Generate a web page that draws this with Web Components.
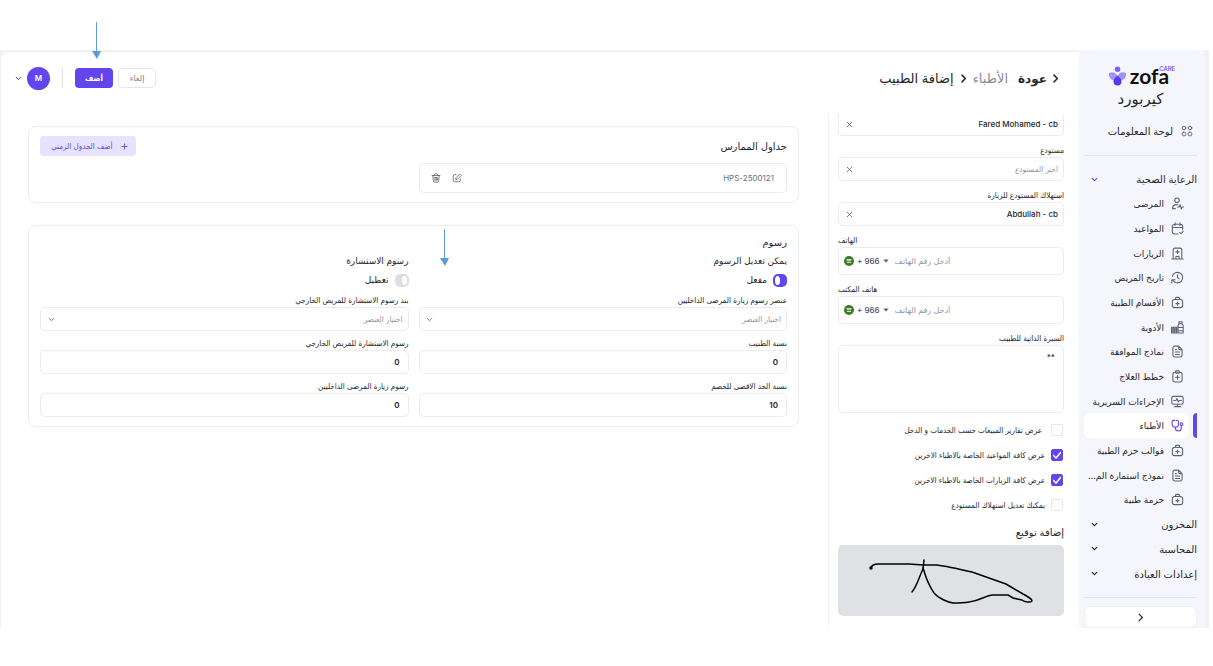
<!DOCTYPE html>
<html lang="ar" dir="rtl">
<head>
<meta charset="utf-8">
<meta name="viewport" content="width=device-width, initial-scale=1">
<title>إضافة الطبيب</title>
<style>
  :root {
    --brand: #6345ed;
    --brand-soft: #e7e2fd;
    --ink: #25262b;
    --muted: #8f94a3;
    --line: #ececef;
    --side: #f5f6fb;
    --narrow: Inter, "DejaVu Sans Condensed", "DejaVu Sans", sans-serif;
  }
  * { box-sizing: border-box; }
  body {
    margin: 0;
    background: #fff;
    color: var(--ink);
    font-family: Inter, "DejaVu Sans", sans-serif;
    font-size: 9px;
  }
</style>
</head>
<body>
<app-shell>
  <side-bar slot="side">
    <side-group label="الرعاية الصحية" open></side-group>
    <side-item icon="patient" label="المرضى"></side-item>
    <side-item icon="calendar" label="المواعيد"></side-item>
    <side-item icon="building" label="الزيارات"></side-item>
    <side-item icon="history" label="تاريخ المريض"></side-item>
    <side-item icon="bag" label="الأقسام الطبية"></side-item>
    <side-item icon="medicine" label="الأدوية"></side-item>
    <side-item icon="file" label="نماذج الموافقة"></side-item>
    <side-item icon="clipboard" label="خطط العلاج"></side-item>
    <side-item icon="monitor" label="الإجراءات السريرية"></side-item>
    <side-item icon="stethoscope" label="الأطباء" active></side-item>
    <side-item icon="bag" label="قوالب حزم الطبية"></side-item>
    <side-item icon="file" label="نموذج استمارة الم..."></side-item>
    <side-item icon="bag" label="حزمة طبية"></side-item>
    <side-group label="المخزون"></side-group>
    <side-group label="المحاسبة"></side-group>
    <side-group label="إعدادات العيادة"></side-group>
  </side-bar>

  <top-bar slot="top"></top-bar>

  <doctor-form slot="form">
    <select-field value="Fared Mohamed - cb" clearable></select-field>
    <select-field label="مستودع" placeholder="اختر المستودع" clearable></select-field>
    <select-field label="استهلاك المستودع للزيارة" value="Abdullah - cb" clearable></select-field>
    <phone-field label="الهاتف"></phone-field>
    <phone-field label="هاتف المكتب"></phone-field>
    <note-field label="السيرة الذاتية للطبيب" value="**"></note-field>
    <div class="checks">
      <check-row label="عرض تقارير المبيعات حسب الخدمات و الدخل" spaced></check-row>
      <check-row label="عرض كافة المواعيد الخاصة بالاطباء الاخرين" checked></check-row>
      <check-row label="عرض كافة الزيارات الخاصة بالاطباء الاخرين" checked></check-row>
      <check-row label="يمكنك تعديل استهلاك المستودع"></check-row>
    </div>
    <signature-pad label="إضافة توقيع"></signature-pad>
  </doctor-form>

  <panel-card slot="cards" label="جداول الممارس">
    <add-button slot="action">أضف الجدول الزمني</add-button>
    <schedule-row>HPS-2500121</schedule-row>
  </panel-card>

  <panel-card slot="cards" label="رسوم" compact>
    <toggle-field label="يمكن تعديل الرسوم" state="مفعل" checked></toggle-field>
    <toggle-field label="رسوم الاستشارة" state="تعطيل"></toggle-field>
    <select-field label="عنصر رسوم زيارة المرضى الداخليين" placeholder="اختيار العنصر"></select-field>
    <select-field label="بند رسوم الاستشارة للمريض الخارجي" placeholder="اختيار العنصر"></select-field>
    <number-field label="نسبة الطبيب" value="0"></number-field>
    <number-field label="رسوم الاستشارة للمريض الخارجي" value="0"></number-field>
    <number-field label="نسبة الحد الاقصى للخصم" value="10"></number-field>
    <number-field label="رسوم زيارة المرضى الداخليين" value="0"></number-field>
  </panel-card>
</app-shell>

<pointer-arrow style="left: 92px; top: 22px"></pointer-arrow>
<pointer-arrow style="left: 440px; top: 229px"></pointer-arrow>

<script>
// Shared reset, every shadow root starts with it
const BASE = `
  *, *::before, *::after { box-sizing: border-box; }
  button, input, select, textarea { font: inherit; color: inherit; margin: 0; }
  button { border: 0; background: none; padding: 0; cursor: pointer; }
  a { color: inherit; text-decoration: none; }
`;

// Look of every boxed control
const FIELD = `
  :host { display: block; min-width: 0; font-family: var(--narrow); }
  label { display: block; font-size: 8px; line-height: 14px; white-space: nowrap; }
  .box {
    display: flex; align-items: center; height: 24px;
    border: 1px solid var(--line); border-radius: 5px; background: #fff;
  }
  .box:focus-within { border-color: var(--brand); }
  input, select, textarea { border: 0; outline: 0; background: none; appearance: none; min-width: 0; }
`;

const ICONS = {
  grid: '<circle cx="6" cy="6" r="3.6"/><circle cx="18" cy="6" r="3.6"/><rect x="2.5" y="14.5" width="7" height="7" rx="2.5"/><rect x="14.5" y="14.5" width="7" height="7" rx="2.5"/>',
  patient: '<circle cx="11" cy="6" r="4.2"/><path d="M3 21.5c0-4.5 3.2-7.5 7-7.5 1 0 2 .2 2.8.5M3 21.5h5M12 18.5h3l2-4 2 7.500 1.500-3.500H23"/>',
  calendar: '<path d="M21.500 14V8a4 4 0 0 0-4-4h-11a4 4 0 0 0-4 4v10a4 4 0 0 0 4 4H13M7.500 1.500v5M16.500 1.500v5M2.500 10h19M16 19l2.500 2.500 4-4"/>',
  building: '<path d="M4 22V5a3 3 0 0 1 3-3h10a3 3 0 0 1 3 3v17M1.500 22h21M9 22v-4.500h6V22M12 6v6M9 9h6"/>',
  history: '<path d="M3.500 17A9.700 9.700 0 1 0 2.500 10M12 7v5.500l3 2M1.500 22v-6h6"/>',
  bag: '<rect x="2.500" y="6.500" width="19" height="15" rx="4"/><path d="M8 6.500V5a2.500 2.500 0 0 1 2.500-2.500h3A2.500 2.500 0 0 1 16 5v1.500M12 11v6M9 14h6"/>',
  medicine: '<path d="M14.500 1.500h6v3h-6zM15 4.500c0 2-2 2-2 4V11M20 4.500c0 2 2.500 2 2.500 4V22H13M1 11.500h12V22H1zM1 15h12M1 18.500h12M4 11.500V22M7 11.500V22M10 11.500V22M13 12h9.500M13 18h9.500"/>',
  file: '<path d="M14 2H7a3.500 3.500 0 0 0-3.500 3.500v13A3.500 3.500 0 0 0 7 22h10a3.500 3.500 0 0 0 3.500-3.500V8.500zM14 2v4a2.500 2.500 0 0 0 2.500 2.500h4M8 13h8M8 17.500h8M8 8.500h2"/>',
  clipboard: '<rect x="3.500" y="4" width="17" height="18" rx="4"/><rect x="8.500" y="1.500" width="7" height="4.500" rx="1.500"/><path d="M12 10v7M8.500 13.500h7"/>',
  monitor: '<rect x="1.500" y="2.500" width="21" height="14.500" rx="3"/><path d="M12 17v4.500M6.500 21.500h11M5 10h4l2-3.500 2.500 6.500 1.500-3h4"/>',
  stethoscope: '<path d="M7 2.500H5a3 3 0 0 0-3 3V9a6 6 0 0 0 12 0V5.500a3 3 0 0 0-3-3H10M8 15v1.500a5.500 5.500 0 0 0 11 0V12"/><circle cx="19.500" cy="9.500" r="2.500"/>',
  edit: '<path d="M10 4H7a4 4 0 0 0-4 4v9a4 4 0 0 0 4 4h9a4 4 0 0 0 4-4v-3M9 15.500l1-4.500 8.500-8.500 3.500 3.500L13.500 14.500z"/>',
  trash: '<path d="M2.500 6h19M8 6V4a2 2 0 0 1 2-2h4a2 2 0 0 1 2 2v2M4.500 6l1 13a3 3 0 0 0 3 3h7a3 3 0 0 0 3-3l1-13M9.500 11v6M14.500 11v6M9.500 11h5v6h-5"/>',
  down: '<path d="M4 8l8 8 8-8"/>',
  right: '<path d="M8 3l9 9-9 9"/>',
  close: '<path d="M4 4l16 16M20 4L4 20"/>',
  plus: '<path d="M12 3v18M3 12h18"/>',
  caret: '<path d="M3 7h18l-9 10z" fill="currentColor"/>',
};

class AppIcon extends HTMLElement {
  connectedCallback() {
    this.attachShadow({ mode: "open" });
    const size = this.getAttribute("size") || 13;
    const stroke = this.getAttribute("stroke") || 2;
    this.shadowRoot.innerHTML = `
      <style>
        :host { display: inline-flex; flex: none; }
        svg { display: block; fill: none; stroke: currentColor; stroke-linecap: round; stroke-linejoin: round; }
      </style>
      <svg width="${size}" height="${size}" viewBox="0 0 24 24" stroke-width="${stroke}" aria-hidden="true">${ICONS[this.getAttribute("name")] || ""}</svg>
    `;
  }
}

// Base class: render() returns the markup of the shadow root
class BaseElement extends HTMLElement {
  connectedCallback() {
    if (this.shadowRoot) return;
    this.attachShadow({ mode: "open" });
    this.shadowRoot.innerHTML = `<style>${BASE}</style>${this.render()}`;
  }
  attr(name) {
    return this.getAttribute(name) || "";
  }
}

class AppShell extends BaseElement {
  render() {
    return `
      <style>
        :host {
          display: flex; height: 100vh; min-height: 600px;
          padding: 50px 4px 38px 0;
        }
        .app { display: flex; flex: 1; min-width: 0; background: #f3f3f4; }
        main {
          flex: 1; min-width: 0; display: flex; flex-direction: column;
          margin-top: 1px; background: #fff; border: 1px solid #efeff1; border-width: 1px 0 0 1px;
          border-radius: 8px 0 0 0;
        }
        .content { flex: 1; min-height: 0; display: flex; padding-bottom: 2px; }
        .form {
          flex: none; width: 251px; overflow: hidden;
          border-left: 1px solid #f0f0f2; padding: 0 15px 0 9px;
        }
        .cards {
          flex: 1; min-width: 0; display: flex; flex-direction: column; gap: 22px;
          padding: 12px 29px 12px 27px;
        }
      </style>
      <div class="app">
        <slot name="side"></slot>
        <main>
          <slot name="top"></slot>
          <div class="content">
            <div class="form"><slot name="form"></slot></div>
            <div class="cards"><slot name="cards"></slot></div>
          </div>
        </main>
      </div>
    `;
  }
}

class ZofaLogo extends BaseElement {
  render() {
    return `
      <style>
        :host { display: flex; justify-content: center; align-items: center; gap: 3px; direction: ltr; height: 20px; }
        .word { font: 700 21px/20px Lato, sans-serif; color: #111; }
        .care { align-self: flex-start; margin: 0 -2px 0 -13px; font: 500 6px/6px Inter, sans-serif; color: var(--brand); }
        svg { display: block; }
      </style>
      <svg width="19" height="20" viewBox="0 0 38 40" aria-hidden="true">
        <circle cx="19" cy="6.500" r="5.500" fill="#7d63f2"/>
        <path d="M2 14c8-4 16 0 17 8 0 5-3 7-6 7C5 28 1 22 2 14z" fill="#a493f7"/>
        <path d="M36 14c-8-4-16 0-17 8 0 5 3 7 6 7 8-1 12-7 11-15z" fill="#a493f7"/>
        <path d="M19 19c5 4 8 8 8 12a8 8 0 0 1-16 0c0-4 3-8 8-12z" fill="#5b3be8"/>
      </svg>
      <span class="word">zofa</span>
      <span class="care">CARE</span>
    `;
  }
}

class SideBar extends BaseElement {
  render() {
    return `
      <style>
        :host {
          display: flex; flex-direction: column; flex: none; width: 130px;
          padding: 16px 8px 0 5px; background: var(--side);
          border-right: 4px solid #f1f1f3;
        }
        h1 { margin: 0; text-align: center; font-size: 15px; line-height: 26px; font-weight: 400; }
        .home { display: flex; align-items: center; gap: 8px; padding-right: 4px; height: 38px; margin-bottom: 5px; font-size: 10px; }
        .home app-icon { color: #5f6475; }
        hr { width: 100%; margin: 0; border: 0; border-top: 1px solid #e4e5ec; }
        nav { flex: 1; min-height: 0; display: flex; flex-direction: column; padding: 11px 0; }
        .collapse {
          display: flex; align-items: center; justify-content: center; height: 22px;
          margin: 8px 0 0; background: #fff; border: 1px solid #eeeef3; border-radius: 7px;
        }
      </style>
      <zofa-logo></zofa-logo>
      <h1>كيربورد</h1>
      <a class="home" href="#home"><app-icon name="grid" size="12"></app-icon>لوحة المعلومات</a>
      <hr>
      <nav><slot></slot></nav>
      <hr>
      <button class="collapse" type="button" aria-label="طي القائمة"><app-icon name="right" size="9" stroke="3"></app-icon></button>
    `;
  }
}

class SideGroup extends BaseElement {
  render() {
    return `
      <style>
        :host { display: flex; flex: 1; min-height: 0; }
        button { flex: 1; display: flex; align-items: center; justify-content: space-between; padding-left: 7px; font-size: 10px; }
        :host([open]) app-icon { color: var(--brand); }
      </style>
      <button type="button" aria-expanded="${this.hasAttribute("open")}"><span>${this.attr("label")}</span><app-icon name="down" size="7" stroke="4"></app-icon></button>
    `;
  }
}

class SideItem extends BaseElement {
  render() {
    return `
      <style>
        :host { display: flex; flex: 1; min-height: 0; gap: 4px; }
        :host::before { content: ""; flex: none; width: 4px; border-radius: 4px 0 0 4px; }
        a {
          flex: 1; min-width: 0; display: flex; align-items: center; gap: 7px;
          padding-right: 5px; border-radius: 6px; font-size: 9px; white-space: nowrap;
        }
        app-icon { color: #5f6475; }
        :host([active])::before { background: var(--brand); }
        :host([active]) a { background: #fff; }
        :host([active]) app-icon { color: var(--brand); }
      </style>
      <a href="#${this.attr("icon")}"><app-icon name="${this.attr("icon")}"></app-icon><span>${this.attr("label")}</span></a>
    `;
  }
}

class TopBar extends BaseElement {
  render() {
    return `
      <style>
        :host {
          display: flex; align-items: center; justify-content: space-between;
          height: 52px; margin-bottom: 10px; padding: 0 19px 0 14px;
        }
        nav { display: flex; align-items: center; gap: 5px; font-size: 13px; }
        .back { display: flex; align-items: center; gap: 4px; font-size: 12px; font-weight: 700; margin-left: 5px; }
        .parent { color: #8a8b90; }
        .actions { display: flex; align-items: center; gap: 5px; }
        .actions button { height: 20px; width: 38px; border-radius: 4px; font-size: 8px; }
        .cancel { border: 1px solid #e6e6ea; color: #7b7e88; }
        .save { background: var(--brand); color: #fff; font-family: var(--narrow); font-weight: 700; }
        .split { width: 1px; height: 20px; margin: 0 7px; background: #e2e2e6; }
        .actions .user { display: flex; align-items: center; gap: 5px; width: auto; height: 24px; }
        .avatar {
          display: flex; align-items: center; justify-content: center; width: 23px; height: 23px;
          border-radius: 50%; background: var(--brand); color: #fff; font-size: 8px; font-weight: 600;
        }
      </style>
      <nav>
        <a class="back" href="#back"><app-icon name="right" size="9" stroke="4"></app-icon>عودة</a>
        <a class="parent" href="#doctors">الأطباء</a>
        <app-icon name="right" size="9" stroke="4"></app-icon>
        <span>إضافة الطبيب</span>
      </nav>
      <div class="actions">
        <button class="cancel" type="button">إلغاء</button>
        <button class="save" type="submit">أضف</button>
        <span class="split"></span>
        <button class="user" type="button"><span class="avatar">M</span><app-icon name="down" size="7" stroke="3"></app-icon></button>
      </div>
    `;
  }
}

class DoctorForm extends BaseElement {
  render() {
    return `
      <style>
        /* the list is scrolled: the first box sits just under the top edge */
        :host { display: flex; flex-direction: column; gap: 7px; margin-top: -2px; }
        ::slotted(.checks) { margin-top: -3px; }
      </style>
      <slot></slot>
    `;
  }
}

class SelectField extends BaseElement {
  render() {
    const value = this.attr("value");
    const label = this.attr("label");
    return `
      <style>
        ${FIELD}
        select { flex: 1; height: 100%; padding: 0 5px; font-size: 8px; font-weight: 500; }
        select.empty { color: var(--muted); font-weight: 400; }
        button, .arrow { flex: none; display: flex; justify-content: center; width: 20px; color: #666b7a; }
        .arrow { pointer-events: none; }
      </style>
      ${label ? `<label for="control">${label}</label>` : ""}
      <div class="box">
        <select id="control" class="${value ? "" : "empty"}" ${label ? "" : 'aria-label="المستخدم"'}>
          <option>${value || this.attr("placeholder")}</option>
        </select>
        ${this.hasAttribute("clearable")
          ? '<button type="button" aria-label="مسح"><app-icon name="close" size="7" stroke="3"></app-icon></button>'
          : '<span class="arrow"><app-icon name="down" size="7" stroke="3"></app-icon></span>'}
      </div>
    `;
  }
}

class NumberField extends BaseElement {
  render() {
    return `
      <style>
        ${FIELD}
        input { flex: 1; height: 100%; padding: 0 8px; font-size: 8px; font-weight: 600; }
      </style>
      <label for="control">${this.attr("label")}</label>
      <div class="box"><input id="control" type="text" inputmode="numeric" value="${this.attr("value")}"></div>
    `;
  }
}

class PhoneField extends BaseElement {
  render() {
    return `
      <style>
        ${FIELD}
        :host { direction: ltr; }
        .box { height: 28px; padding-left: 5px; gap: 6px; }
        .country { display: flex; align-items: center; gap: 3px; font-size: 8px; font-weight: 500; color: #4d5160; white-space: nowrap; }
        .flag { display: block; }
        input { flex: 1; height: 100%; padding: 0; font-family: Inter, "DejaVu Sans", sans-serif; font-size: 8px; }
        input::placeholder { color: var(--muted); opacity: 1; }
      </style>
      <label for="control">${this.attr("label")}</label>
      <div class="box">
        <button class="country" type="button">
          <svg class="flag" width="10" height="10" viewBox="0 0 20 20" aria-hidden="true">
            <circle cx="10" cy="10" r="10" fill="#3f7a26"/>
            <path d="M5 7h10M5.500 9.500h9M6 13h8" stroke="#fff" stroke-width="1.500" fill="none"/>
          </svg>
          + 966 <app-icon name="caret" size="6" stroke="1"></app-icon>
        </button>
        <input id="control" type="tel" placeholder="أدخل رقم الهاتف">
      </div>
    `;
  }
}

class NoteField extends BaseElement {
  render() {
    return `
      <style>
        ${FIELD}
        textarea {
          display: block; width: 100%; height: 68px; resize: none; padding: 4px 8px;
          border: 1px solid var(--line); border-radius: 5px; font-size: 8px; line-height: 14px; font-weight: 500;
        }
      </style>
      <label for="control">${this.attr("label")}</label>
      <textarea id="control">${this.attr("value")}</textarea>
    `;
  }
}

class CheckRow extends BaseElement {
  render() {
    return `
      <style>
        :host { display: block; font-family: var(--narrow); }
        label { display: flex; align-items: center; gap: 6px; height: 25px; padding-right: 1px; font-size: 8px; white-space: nowrap; }
        :host([spaced]) label { gap: 9px; }
        input {
          appearance: none; flex: none; width: 12px; height: 12px;
          border: 1px solid #e6e6ea; border-radius: 2px; background: #fff;
        }
        .tick { position: relative; display: flex; }
        svg { position: absolute; left: 2px; top: 2px; display: none; }
        input:checked { background: var(--brand); border-color: var(--brand); }
        input:checked + svg { display: block; }
      </style>
      <label>
        <span class="tick">
          <input type="checkbox" ${this.hasAttribute("checked") ? "checked" : ""}>
          <svg width="8" height="8" viewBox="0 0 8 8" fill="none" stroke="#fff" stroke-width="1.500" aria-hidden="true"><path d="M0 4l3 3 5-6"/></svg>
        </span>
        ${this.attr("label")}
      </label>
    `;
  }
}

class SignaturePad extends BaseElement {
  render() {
    return `
      <style>
        :host { display: block; }
        h2 { margin: 0 0 5px; font-size: 10px; line-height: 16px; font-weight: 400; }
        svg { display: block; width: 100%; height: auto; background: #e0e1e5; border-radius: 5px; }
      </style>
      <h2>${this.attr("label")}</h2>
      <svg viewBox="0 0 226 71" fill="none" stroke="#000" stroke-width="1.500" stroke-linecap="round" stroke-linejoin="round" role="img" aria-label="${this.attr("label")}">
        <path d="M33 23c0-2 3-4 7-4h31l14 1h14c8 1 22 4 35 7l34 12 17 10c6 3 9 6 9 7-2 2-7 1-10-1l-9-2-5-3h-16c-8 1-12 6-23 7-6 1-10 1-16 1-6-1-15-5-19-10-4-6-8-15-10-22l-1-3"/>
        <path d="M86 15l-1 9c-4 8-6 17-11 23"/>
        <circle cx="33" cy="23" r="1"/>
      </svg>
    `;
  }
}

class PanelCard extends BaseElement {
  render() {
    return `
      <style>
        :host { display: block; border: 1px solid var(--line); border-radius: 8px; padding: 9px 11px; }
        header { display: flex; align-items: center; justify-content: space-between; min-height: 20px; margin-bottom: 7px; }
        :host([compact]) header { min-height: 14px; margin-bottom: 4px; }
        h2 { margin: 0; font-size: 10px; line-height: 14px; font-weight: 400; }
        .grid { display: grid; grid-template-columns: 1fr 1fr; gap: 5px 10px; }
      </style>
      <header><h2>${this.attr("label")}</h2><slot name="action"></slot></header>
      <div class="grid"><slot></slot></div>
    `;
  }
}

class AddButton extends BaseElement {
  render() {
    return `
      <style>
        :host { display: block; font-family: var(--narrow); }
        button {
          display: flex; align-items: center; gap: 8px; height: 20px; padding: 0 8px 0 11px;
          border-radius: 4px; background: var(--brand-soft); color: var(--brand); font-size: 8px; white-space: nowrap;
        }
      </style>
      <button type="button"><app-icon name="plus" size="7" stroke="3"></app-icon><slot></slot></button>
    `;
  }
}

class ScheduleRow extends BaseElement {
  render() {
    return `
      <style>
        :host {
          display: flex; align-items: center; gap: 11px; height: 30px; padding: 0 12px 0 11px;
          border: 1px solid var(--line); border-radius: 5px; color: #6d7079; font-size: 8px;
        }
        .code { flex: 1; }
        button { display: flex; color: #5f6475; }
      </style>
      <span class="code"><slot></slot></span>
      <button type="button" aria-label="تعديل"><app-icon name="edit" size="10"></app-icon></button>
      <button type="button" aria-label="حذف"><app-icon name="trash" size="10"></app-icon></button>
    `;
  }
}

class ToggleField extends BaseElement {
  render() {
    return `
      <style>
        :host { display: flex; flex-direction: column; gap: 3px; line-height: 16px; font-size: 9px; }
        label { display: flex; align-items: center; gap: 6px; }
        input {
          appearance: none; display: flex; align-items: center; flex: none; width: 14px; height: 13px; padding: 0 2px;
          border-radius: 5px; background: #dddee3;
        }
        input::before { content: ""; flex: none; width: 5px; height: 9px; border-radius: 50%; background: #fff; }
        input:checked { background: var(--brand); justify-content: flex-end; }
      </style>
      <span>${this.attr("label")}</span>
      <label><input type="checkbox" role="switch" ${this.hasAttribute("checked") ? "checked" : ""}>${this.attr("state")}</label>
    `;
  }
}

// Blue callout arrow that lies over the page
class PointerArrow extends BaseElement {
  render() {
    return `
      <style>
        :host { position: absolute; pointer-events: none; }
        svg { display: block; }
      </style>
      <svg width="9" height="37" viewBox="0 0 9 37" aria-hidden="true">
        <path d="M4 0h1v29h4l-4 8-5-8h4z" fill="#5b9bd5"/>
      </svg>
    `;
  }
}

customElements.define("app-icon", AppIcon);
customElements.define("app-shell", AppShell);
customElements.define("zofa-logo", ZofaLogo);
customElements.define("side-bar", SideBar);
customElements.define("side-group", SideGroup);
customElements.define("side-item", SideItem);
customElements.define("top-bar", TopBar);
customElements.define("doctor-form", DoctorForm);
customElements.define("select-field", SelectField);
customElements.define("number-field", NumberField);
customElements.define("phone-field", PhoneField);
customElements.define("note-field", NoteField);
customElements.define("check-row", CheckRow);
customElements.define("signature-pad", SignaturePad);
customElements.define("panel-card", PanelCard);
customElements.define("add-button", AddButton);
customElements.define("schedule-row", ScheduleRow);
customElements.define("toggle-field", ToggleField);
customElements.define("pointer-arrow", PointerArrow);
</script>
</body>
</html>
